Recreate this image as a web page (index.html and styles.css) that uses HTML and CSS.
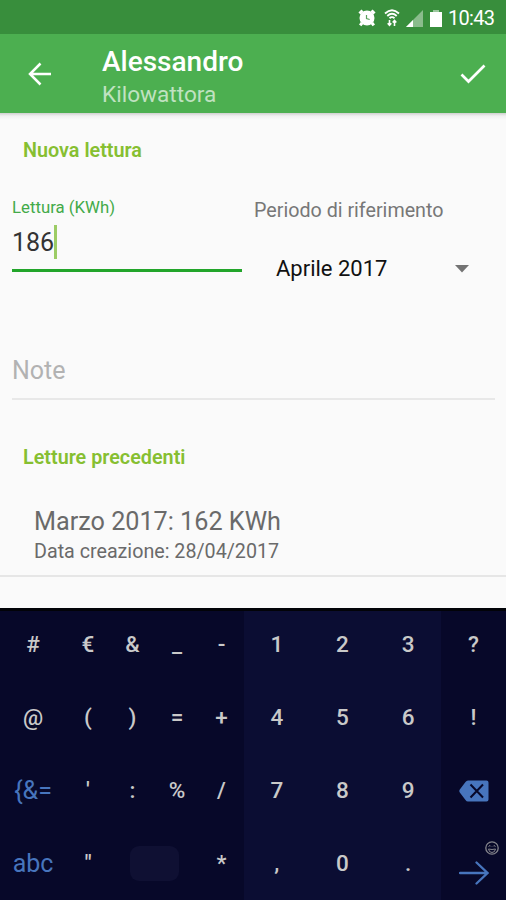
FILE: index.html
```html
<!DOCTYPE html>
<html lang="it">
<head>
  <meta charset="UTF-8">
  <meta name="viewport" content="width=device-width, initial-scale=1.0">
  <title>Nuova lettura</title>
  <link rel="stylesheet" href="styles.css">
</head>
<body>
  <div class="phone">
    <!-- Status bar -->
    <div class="status-bar">
      <svg class="ic-alarm" width="18" height="18" viewBox="0 0 18 18">
        <circle cx="9" cy="9" r="7.500" fill="#fff"/>
        <path d="M1.500 4.500l3-3M13.500 1.500l3 3M4 14l-1.800 2.400M14 14l1.800 2.400" stroke="#fff" stroke-width="3"/>
        <path d="M8.500 6v3.500l3.200 1" fill="none" stroke="#5ba25e" stroke-width="1.200"/>
      </svg>
      <svg class="ic-wifi" width="16" height="18" viewBox="0 0 16 18" fill="none" stroke="#fff">
        <path d="M1 4.500Q8-2 15 4.500M3.300 7Q8 2.600 12.700 7M5.500 9.200Q8 7 10.500 9.200" stroke-width="1.800"/>
        <path d="M5.500 11v5M3.700 14.300l1.800 2 1.800-2M10.500 17v-5M8.700 13.500l1.800-2 1.800 2" stroke-width="1.600"/>
      </svg>
      <svg class="ic-signal" width="17" height="17" viewBox="0 0 17 17">
        <path d="M0 17L17 0v17z" fill="#8abc8c"/>
        <path d="M0 17l7-7v7z" fill="#fff"/>
      </svg>
      <svg class="ic-battery" width="12" height="17" viewBox="0 0 12 17">
        <path d="M3.500 0h5v2H12v15H0V2h3.500z" fill="#fff"/>
        <path d="M3.500 0h5v2h-5z" fill="#9cc79e"/>
      </svg>
      <span class="clock">10:43</span>
    </div>

    <!-- App bar -->
    <header class="app-bar">
      <svg class="back" width="24" height="24" viewBox="0 0 24 24" fill="none" stroke="#fff" stroke-width="2.500">
        <path d="M23 12H2.500M12.500 1.500L2 12l10.500 10.500"/>
      </svg>
      <div class="titles">
        <h1>Alessandro</h1>
        <p>Kilowattora</p>
      </div>
      <svg class="done" width="26" height="20" viewBox="0 0 26 20" fill="none" stroke="#fff" stroke-width="2.700">
        <path d="M1.500 10.500l7 7L24.500 1.500"/>
      </svg>
    </header>

    <main>
      <h2 class="first">Nuova lettura</h2>
      <div class="row">
        <div class="reading">
          <label>Lettura (KWh)</label>
          <div class="value"><span>186</span><i class="cursor"></i></div>
        </div>
        <div class="period">
          <label>Periodo di riferimento</label>
          <div class="select">
            <span>Aprile 2017</span>
            <svg width="14" height="8" viewBox="0 0 14 8"><path d="M0 0h14L7 7.500z" fill="#737373"/></svg>
          </div>
        </div>
      </div>
      <div class="note"><span>Note</span></div>
      <h2 class="second">Letture precedenti</h2>
      <div class="entry">
        <p class="entry-title"><span>Marzo 2017: 162 KWh</span></p>
        <p class="entry-date"><span>Data creazione: 28/04/2017</span></p>
      </div>
    </main>

    <!-- Keyboard -->
    <div class="keyboard">
      <div class="keys symbols">
        <span>#</span><span>€</span><span>&amp;</span><span>_</span><span>-</span>
        <span>@</span><span>(</span><span>)</span><span>=</span><span>+</span>
        <span class="fn">{&amp;=</span><span>'</span><span>:</span><span>%</span><span>/</span>
        <span class="fn">abc</span><span>"</span><span class="space"><i></i></span><span>*</span>
      </div>
      <div class="keys digits">
        <span>1</span><span>2</span><span>3</span>
        <span>4</span><span>5</span><span>6</span>
        <span>7</span><span>8</span><span>9</span>
        <span>,</span><span>0</span><span>.</span>
      </div>
      <div class="keys side">
        <span>?</span>
        <span>!</span>
        <span class="backspace">
          <svg width="30" height="22" viewBox="0 0 30 22">
            <path d="M9 .5h18.500a2 2 0 0 1 2 2v17a2 2 0 0 1-2 2H9q-1.500 0-2.500-1.500L.8 12.500q-1-1.500 0-3L6.500 2Q7.500.5 9 .5z" fill="#4775bd"/>
            <path d="M11.500 4.500l12.500 13M24 4.500l-12.500 13" stroke="#070829" stroke-width="2"/>
          </svg>
        </span>
        <span class="enter">
          <svg class="smile" width="14" height="14" viewBox="0 0 14 14" fill="none" stroke="#85858c">
            <circle cx="7" cy="7" r="6.200" stroke-width="1.300"/>
            <path d="M3.500 8q3.500 1 7 0-.5 3.500-3.500 3.500T3.500 8zM3.500 5.500l1.500-1 1 1M8 5.500l1-1 1.500 1"/>
          </svg>
          <svg class="arrow" width="30" height="24" viewBox="0 0 30 24" fill="none" stroke="#4775bd" stroke-width="2.300" stroke-linecap="round">
            <path d="M1 12h27M17.500 1.500L28.500 12 17.500 22.500"/>
          </svg>
        </span>
      </div>
    </div>
  </div>
</body>
</html>
```

FILE: styles.css
```css
* {
  box-sizing: border-box;
}

body {
  margin: 0;
  font-family: Roboto, sans-serif;
  background: #fafafa;
}

h1, h2, p {
  margin: 0;
}

svg {
  display: block;
  flex: none;
}

.phone {
  width: 506px;
  height: 900px;
  display: flex;
  flex-direction: column;
  overflow: hidden;
  white-space: nowrap;
}

/* Status bar */
.status-bar {
  height: 34px;
  flex: none;
  background: #388e3c;
  display: flex;
  align-items: center;
  justify-content: flex-end;
  padding: 2px 12px 0 0;
  color: #fff;
}

.ic-alarm {
  margin-right: 8px;
}

.ic-wifi {
  margin-right: 6px;
}

.ic-signal {
  margin-right: 7px;
}

.ic-battery {
  margin-right: 6px;
}

.clock {
  width: 46px;
  font-size: 20px;
  letter-spacing: -0.7px;
}

/* App bar */
.app-bar {
  height: 79px;
  flex: none;
  background: #4caf50;
  color: #fff;
  display: flex;
  align-items: center;
  padding: 0 20px 0 28px;
}

.titles {
  flex: 1;
  padding: 7px 0 0 50px;
}

.titles h1 {
  font-size: 28px;
  line-height: 35px;
  font-weight: 500;
}

.titles p {
  font-size: 22.6px;
  line-height: 32px;
  color: #c0e2c1;
}

/* Form */
main {
  flex: 1;
  display: flex;
  flex-direction: column;
  background: linear-gradient(#cfcfcf, #f0f0f0 3px, #fafafa 7px);
}

h2 {
  font-size: 19.8px;
  line-height: 24px;
  font-weight: 600;
  color: #86bf31;
  padding-left: 23px;
}

.first {
  margin-top: 26px;
}

.row {
  display: flex;
  margin: 33px 0 0 12px;
}

.reading {
  width: 230px;
  height: 76px;
  border-bottom: 3px solid #22a52a;
}

.reading label {
  display: block;
  font-size: 16.8px;
  line-height: 22px;
  color: #43aa49;
}

.value {
  display: flex;
  align-items: center;
  height: 47px;
  font-size: 25px;
  color: #333;
}

.value span {
  padding-top: 2px;
}

.cursor {
  width: 3px;
  height: 34px;
  background: #9ccc65;
}

.period {
  flex: 1;
  padding: 3px 37px 0 12px;
}

.period label {
  display: block;
  font-size: 19.7px;
  line-height: 24px;
  color: #777;
}

.select {
  display: flex;
  align-items: center;
  justify-content: space-between;
  margin-top: 32px;
  padding-left: 22px;
  font-size: 22px;
  line-height: 28px;
  color: #111;
}

.note {
  margin: 72px 11px 0 12px;
  height: 45px;
  border-bottom: 2px solid #e8e8e8;
  font-size: 25px;
  line-height: 32px;
  color: #b2b2b2;
}

.second {
  margin-top: 46px;
}

.entry {
  margin-top: 37px;
  height: 70px;
  padding-left: 34px;
  border-bottom: 2px solid #e6e6e6;
  color: #6a6a6a;
}

.entry-title {
  font-size: 25.2px;
  line-height: 30px;
}

.entry-date {
  font-size: 19.7px;
  line-height: 30px;
}

/* Keyboard */
.keyboard {
  height: 292px;
  flex: none;
  display: flex;
  border-top: 3px solid #020308;
  background: #070829;
  color: #c9c9c9;
  font-size: 22.5px;
  font-weight: 500;
}

.keys {
  display: grid;
  grid-template-rows: repeat(4, 73px);
  margin-top: -3px;
}

.keys span {
  display: flex;
  align-items: center;
  justify-content: center;
  padding-bottom: 2px;
}

.symbols {
  width: 244px;
  grid-template-columns: 66px 44px 45px 44px 45px;
}

.digits {
  width: 197px;
  margin-top: 0;
  grid-template-columns: repeat(3, 1fr);
  background: #0b0d33;
}

.digits span {
  margin-top: -6px;
}

.side {
  flex: 1;
}

.symbols .fn {
  font-size: 25px;
  font-weight: 400;
  padding-bottom: 0;
  color: #4775bd;
}

.symbols .space {
  grid-column: span 2;
  padding-bottom: 0;
}

.space i {
  width: 49px;
  height: 35px;
  border-radius: 9px;
  background: #0f1033;
}

.side .backspace {
  padding-bottom: 0;
}

.keys .enter {
  flex-direction: column;
}

.smile {
  margin: 0 0 6px 37px;
}
```
